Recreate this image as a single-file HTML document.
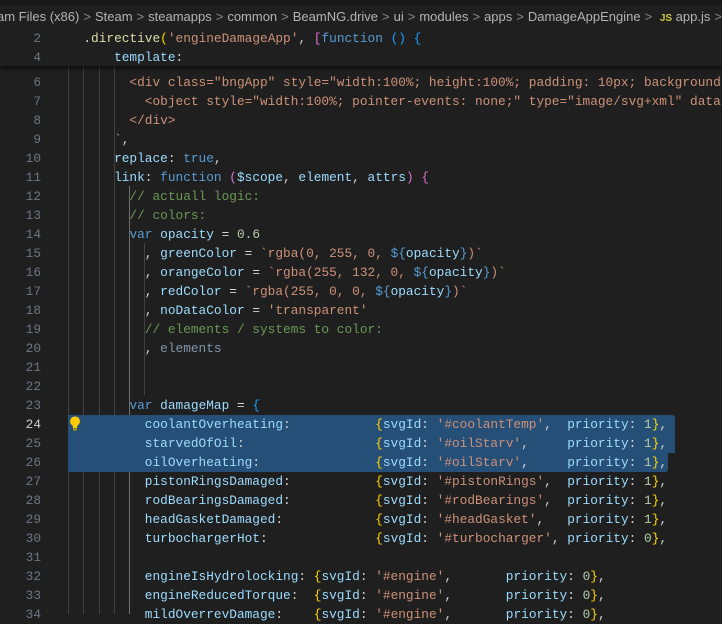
<!DOCTYPE html>
<html><head><meta charset="utf-8"><style>
body{margin:0;width:722px;height:614px;overflow:hidden;background:#1f1f1f;position:relative;font-family:"Liberation Mono",monospace;}
.top{position:absolute;left:0;top:0;width:722px;height:5px;background:#181818;}
.bc{position:absolute;left:0;top:6px;height:22px;line-height:22px;font-family:"Liberation Sans",sans-serif;font-size:13px;color:#b4b4b4;white-space:pre;left:-3px}
.bc .s{color:#8a8a8a;padding:0 4px}
.js{color:#cbcb41;font-weight:bold;font-size:10px}
.row{position:absolute;left:0;height:19px;width:722px;line-height:19px;font-size:12.8px;white-space:pre;}
.ln{position:absolute;right:681px;color:#6e7681;text-align:right;width:40px}
.code{position:absolute;left:68px;color:#d4d4d4}
.hdr{position:absolute;left:0;top:28px;width:722px;height:38px;background:#1f1f1f;box-shadow:0 3px 4px rgba(0,0,0,.55);z-index:5}
.g{position:absolute;width:1px;background:#404040}
.sel{position:absolute;background:#264f78}
.k{color:#569cd6}.p{color:#9cdcfe}.s2{color:#ce9178}.n{color:#b5cea8}.c{color:#6a9955}.f{color:#dcdcaa}
.y{color:#ffd700}.m{color:#da70d6}.b{color:#179fff}.d{color:#7f97aa}.w{color:#d4d4d4}
</style></head><body>
<div class="top"></div>
<div class="bc">am Files (x86)<span class="s">&gt;</span>Steam<span class="s">&gt;</span>steamapps<span class="s">&gt;</span>common<span class="s">&gt;</span>BeamNG.drive<span class="s">&gt;</span>ui<span class="s">&gt;</span>modules<span class="s">&gt;</span>apps<span class="s">&gt;</span>DamageAppEngine<span class="s">&gt;</span> <span class="js">JS</span> app.js<span class="s">&gt;</span></div>

<div class="g" style="left:68px;top:66px;height:548px"></div>
<div class="g" style="left:83px;top:66px;height:548px"></div>
<div class="g" style="left:99px;top:66px;height:548px"></div>
<div class="g" style="left:114px;top:66px;height:548px"></div>
<div class="g" style="left:129px;top:186px;height:428px;background:#707070"></div>
<div class="g" style="left:144px;top:243px;height:152px"></div>

<div class="sel" style="left:68px;top:414.5px;width:607px;height:38px;border-radius:0 3px 0 0"></div>
<div class="sel" style="left:68px;top:452.5px;width:600px;height:19px;border-radius:0 0 3px 0"></div>
<svg style="position:absolute;left:68px;top:415px" width="14" height="17" viewBox="0 0 14 17"><path d="M7 1.5a4.8 4.8 0 0 0-3 8.6c.6.5.9 1.2.9 2V13h4.2v-.9c0-.8.3-1.5.9-2A4.8 4.8 0 0 0 7 1.5z" fill="#ffcc00"/><rect x="5" y="13.5" width="4" height="2" fill="#c89b00"/></svg>

<div class="hdr">
<div class="row" style="top:0.5px"><span class="ln">2</span><span class="code">  .<span class="f">directive</span><span class="y">(</span><span class="s2">'engineDamageApp'</span>, <span class="m">[</span><span class="k">function</span> <span class="b">()</span> <span class="b">{</span></span></div>
<div class="row" style="top:19.5px"><span class="ln">4</span><span class="code">      <span class="p">template</span>:</span></div>
</div>

<div class="row" style="top:72.5px"><span class="ln">6</span><span class="code s2">        &lt;div class="bngApp" style="width:100%; height:100%; padding: 10px; background</span></div>
<div class="row" style="top:91.5px"><span class="ln">7</span><span class="code s2">          &lt;object style="width:100%; pointer-events: none;" type="image/svg+xml" data</span></div>
<div class="row" style="top:110.5px"><span class="ln">8</span><span class="code s2">        &lt;/div&gt;</span></div>
<div class="row" style="top:129.5px"><span class="ln">9</span><span class="code">      <span class="s2">`</span>,</span></div>
<div class="row" style="top:148.5px"><span class="ln">10</span><span class="code">      <span class="p">replace</span>: <span class="k">true</span>,</span></div>
<div class="row" style="top:167.5px"><span class="ln">11</span><span class="code">      <span class="p">link</span>: <span class="k">function</span> <span class="m">(</span><span class="p">$scope</span>, <span class="p">element</span>, <span class="p">attrs</span><span class="m">)</span> <span class="m">{</span></span></div>
<div class="row" style="top:186.5px"><span class="ln">12</span><span class="code c">        // actuall logic:</span></div>
<div class="row" style="top:205.5px"><span class="ln">13</span><span class="code c">        // colors:</span></div>
<div class="row" style="top:224.5px"><span class="ln">14</span><span class="code">        <span class="k">var</span> <span class="p">opacity</span> = <span class="n">0.6</span></span></div>
<div class="row" style="top:243.5px"><span class="ln">15</span><span class="code">          , <span class="p">greenColor</span> = <span class="s2">`rgba(0, 255, 0, </span><span class="k">${</span><span class="p">opacity</span><span class="k">}</span><span class="s2">)`</span></span></div>
<div class="row" style="top:262.5px"><span class="ln">16</span><span class="code">          , <span class="p">orangeColor</span> = <span class="s2">`rgba(255, 132, 0, </span><span class="k">${</span><span class="p">opacity</span><span class="k">}</span><span class="s2">)`</span></span></div>
<div class="row" style="top:281.5px"><span class="ln">17</span><span class="code">          , <span class="p">redColor</span> = <span class="s2">`rgba(255, 0, 0, </span><span class="k">${</span><span class="p">opacity</span><span class="k">}</span><span class="s2">)`</span></span></div>
<div class="row" style="top:300.5px"><span class="ln">18</span><span class="code">          , <span class="p">noDataColor</span> = <span class="s2">'transparent'</span></span></div>
<div class="row" style="top:319.5px"><span class="ln">19</span><span class="code c">          // elements / systems to color:</span></div>
<div class="row" style="top:338.5px"><span class="ln">20</span><span class="code">          , <span class="d">elements</span></span></div>
<div class="row" style="top:357.5px"><span class="ln">21</span></div>
<div class="row" style="top:376.5px"><span class="ln">22</span></div>
<div class="row" style="top:395.5px"><span class="ln">23</span><span class="code">        <span class="k">var</span> <span class="p">damageMap</span> = <span class="b">{</span></span></div>
<div class="row" style="top:414.5px"><span class="ln" style="color:#ccc">24</span><span class="code">          <span class="p">coolantOverheating</span>:           <span class="y">{</span><span class="p">svgId</span>: <span class="s2">'#coolantTemp'</span>,  <span class="p">priority</span>: <span class="n">1</span><span class="y">}</span>,</span></div>
<div class="row" style="top:433.5px"><span class="ln">25</span><span class="code">          <span class="p">starvedOfOil</span>:                 <span class="y">{</span><span class="p">svgId</span>: <span class="s2">'#oilStarv'</span>,     <span class="p">priority</span>: <span class="n">1</span><span class="y">}</span>,</span></div>
<div class="row" style="top:452.5px"><span class="ln">26</span><span class="code">          <span class="p">oilOverheating</span>:               <span class="y">{</span><span class="p">svgId</span>: <span class="s2">'#oilStarv'</span>,     <span class="p">priority</span>: <span class="n">1</span><span class="y">}</span>,</span></div>
<div class="row" style="top:471.5px"><span class="ln">27</span><span class="code">          <span class="p">pistonRingsDamaged</span>:           <span class="y">{</span><span class="p">svgId</span>: <span class="s2">'#pistonRings'</span>,  <span class="p">priority</span>: <span class="n">1</span><span class="y">}</span>,</span></div>
<div class="row" style="top:490.5px"><span class="ln">28</span><span class="code">          <span class="p">rodBearingsDamaged</span>:           <span class="y">{</span><span class="p">svgId</span>: <span class="s2">'#rodBearings'</span>,  <span class="p">priority</span>: <span class="n">1</span><span class="y">}</span>,</span></div>
<div class="row" style="top:509.5px"><span class="ln">29</span><span class="code">          <span class="p">headGasketDamaged</span>:            <span class="y">{</span><span class="p">svgId</span>: <span class="s2">'#headGasket'</span>,   <span class="p">priority</span>: <span class="n">1</span><span class="y">}</span>,</span></div>
<div class="row" style="top:528.5px"><span class="ln">30</span><span class="code">          <span class="p">turbochargerHot</span>:              <span class="y">{</span><span class="p">svgId</span>: <span class="s2">'#turbocharger'</span>, <span class="p">priority</span>: <span class="n">0</span><span class="y">}</span>,</span></div>
<div class="row" style="top:547.5px"><span class="ln">31</span></div>
<div class="row" style="top:566.5px"><span class="ln">32</span><span class="code">          <span class="p">engineIsHydrolocking</span>: <span class="y">{</span><span class="p">svgId</span>: <span class="s2">'#engine'</span>,       <span class="p">priority</span>: <span class="n">0</span><span class="y">}</span>,</span></div>
<div class="row" style="top:585.5px"><span class="ln">33</span><span class="code">          <span class="p">engineReducedTorque</span>:  <span class="y">{</span><span class="p">svgId</span>: <span class="s2">'#engine'</span>,       <span class="p">priority</span>: <span class="n">0</span><span class="y">}</span>,</span></div>
<div class="row" style="top:604.5px"><span class="ln">34</span><span class="code">          <span class="p">mildOverrevDamage</span>:    <span class="y">{</span><span class="p">svgId</span>: <span class="s2">'#engine'</span>,       <span class="p">priority</span>: <span class="n">0</span><span class="y">}</span>,</span></div>
</body></html>
